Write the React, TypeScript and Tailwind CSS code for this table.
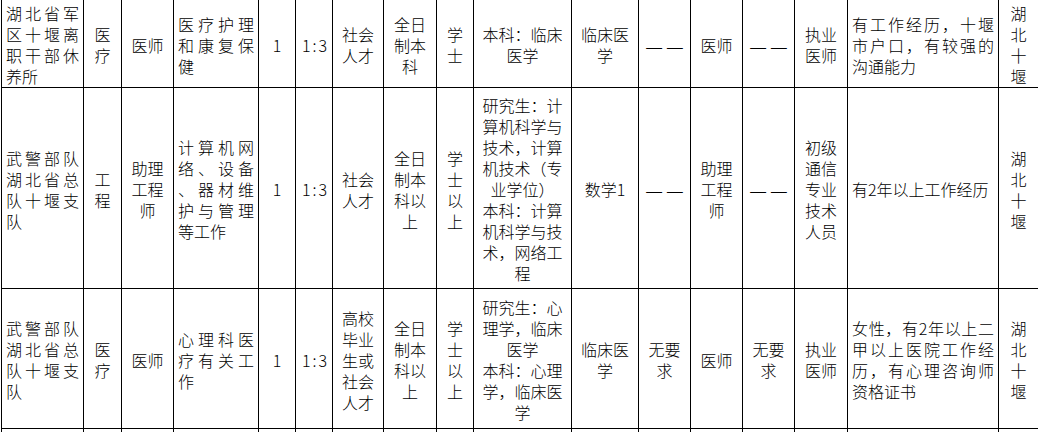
type Cell = { lines: string[]; j?: boolean };

const cols = "grid-cols-[81px_37px_51px_84px_36px_36px_50px_52px_36px_97px_66px_51px_51px_51px_52px_150px_39px]";

const c = (s: string): Cell => ({ lines: s.split("/") });
const j = (s: string): Cell => ({ lines: s.split("/"), j: true });

const rows: { h: string; cells: Cell[] }[] = [
  {
    h: "h-[87px]",
    cells: [
      j("湖北省军/区十堰离/职干部休/养所"),
      c("医/疗"),
      c("医师"),
      j("医疗护理/和康复保/健"),
      c("1"),
      c("1:3"),
      c("社会/人才"),
      c("全日/制本/科"),
      c("学/士"),
      c("本科：临床/医学"),
      c("临床医/学"),
      c("——"),
      c("医师"),
      c("——"),
      c("执业/医师"),
      j("有工作经历，十堰/市户口，有较强的/沟通能力"),
      c("湖/北/十/堰"),
    ],
  },
  {
    h: "h-[200px]",
    cells: [
      j("武警部队/湖北省总/队十堰支/队"),
      c("工/程"),
      c("助理/工程/师"),
      j("计算机网/络、设备/、器材维/护与管理/等工作"),
      c("1"),
      c("1:3"),
      c("社会/人才"),
      c("全日/制本/科以/上"),
      c("学/士/以/上"),
      c("研究生：计/算机科学与/技术，计算/机技术（专/业学位）/本科：计算/机科学与技/术，网络工/程"),
      c("数学1"),
      c("——"),
      c("助理/工程/师"),
      c("——"),
      c("初级/通信/专业/技术/人员"),
      j("有2年以上工作经历"),
      c("湖/北/十/堰"),
    ],
  },
  {
    h: "h-[139px]",
    cells: [
      j("武警部队/湖北省总/队十堰支/队"),
      c("医/疗"),
      c("医师"),
      j("心理科医/疗有关工/作"),
      c("1"),
      c("1:3"),
      c("高校/毕业/生或/社会/人才"),
      c("全日/制本/科以/上"),
      c("学/士/以/上"),
      c("研究生：心/理学，临床/医学/本科：心理/学，临床医/学"),
      c("临床医/学"),
      c("无要/求"),
      c("医师"),
      c("无要/求"),
      c("执业/医师"),
      j("女性，有2年以上二/甲以上医院工作经/历，有心理咨询师/资格证书"),
      c("湖/北/十/堰"),
    ],
  },
];

function Line({ text, justify }: { text: string; justify: boolean }) {
  if (text === "——") {
    // the sheet shows two short strokes with a gap, so keep the dashes apart
    return (
      <div className="flex justify-center gap-[3px] text-[20px] leading-[21px] whitespace-nowrap">
        <span>—</span>
        <span>—</span>
      </div>
    );
  }
  if (text === "1:3") {
    return <div className="tracking-[2px] pl-[2px] whitespace-nowrap">{text}</div>;
  }
  return (
    <div className={justify ? "whitespace-nowrap text-justify [text-align-last:justify]" : "whitespace-nowrap"}>
      {text}
    </div>
  );
}

function TableCell({ cell }: { cell: Cell }) {
  return (
    <div className="bg-white flex items-center px-[4px] pt-[3px] overflow-hidden">
      <div className={cell.j ? "w-full text-left" : "w-full text-center"}>
        {cell.lines.map((line, i) => (
          <Line key={i} text={line} justify={!!cell.j && i < cell.lines.length - 1} />
        ))}
      </div>
    </div>
  );
}

export default function App() {
  return (
    <div
      lang="zh-CN"
      className="w-[1039px] h-[432px] overflow-hidden bg-white pl-px text-black text-[16px] leading-[21px] font-light font-['Noto_Sans_CJK_SC',sans-serif]"
    >
      <div className={`grid ${cols} gap-px bg-black border-l border-black w-max`}>
        {rows.map((row, r) =>
          row.cells.map((cell, i) => (
            <div key={`${r}-${i}`} className={`${row.h} grid`}>
              <TableCell cell={cell} />
            </div>
          ))
        )}
        {Array.from({ length: 17 }).map((_, i) => (
          <div key={`e-${i}`} className="h-[20px] bg-white" />
        ))}
      </div>
    </div>
  );
}
